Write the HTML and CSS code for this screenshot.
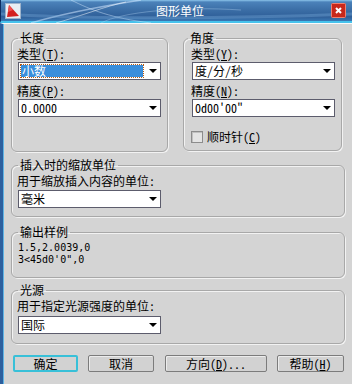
FILE: index.html
```html
<!DOCTYPE html>
<html lang="zh-CN">
<head>
    <meta charset="UTF-8">
    <title>图形单位</title>
    <link rel="stylesheet" href="styles.css">
</head>
<body>
    <div class="window">
        <div class="titlebar">
            <svg class="streaks" width="352" height="23" viewBox="0 0 352 23">
                <path d="M30 23 C60 14 90 8 140 0" stroke="#cfe6ff" stroke-width="1.5" fill="none" opacity="0.55"/>
                <path d="M55 23 C80 16 105 6 125 2" stroke="#ffffff" stroke-width="1" fill="none" opacity="0.5"/>
                <path d="M70 0 C90 10 110 18 150 23" stroke="#d8ecff" stroke-width="1" fill="none" opacity="0.45"/>
                <path d="M100 23 C120 12 180 6 240 10" stroke="#bcdcf8" stroke-width="1" fill="none" opacity="0.35"/>
                <path d="M0 14 C60 18 200 20 352 14" stroke="#7fb2e0" stroke-width="3" fill="none" opacity="0.35"/>
            </svg>
            <span class="app-icon">
                <svg width="16" height="16" viewBox="0 0 16 16">
                    <rect x="0.5" y="0.5" width="15" height="15" fill="#e8eef4" stroke="#9fb4cc"/>
                    <polygon points="4,2 14,13 2,14" fill="#d42020"/>
                    <polygon points="4,2 8,7 3,9" fill="#f05050"/>
                </svg>
            </span>
            <span class="title">图形单位</span>
            <span class="close-btn">
                <svg width="15" height="15" viewBox="0 0 15 15">
                    <rect x="0.5" y="0.5" width="14" height="14" rx="1" fill="#c8281c" stroke="#f08070"/>
                    <path d="M5 5 L10 10 M10 5 L5 10" stroke="#ffffff" stroke-width="2"/>
                </svg>
            </span>
        </div>

        <div class="dialog">
            <div class="top-row">
                <fieldset class="group group-length">
                    <legend>长度</legend>
                    <div class="lbl">类型(<u>T</u>):</div>
                    <div class="combo">
                        <span class="value selected">小数</span>
                        <span class="arrow"></span>
                    </div>
                    <div class="lbl lbl-gap">精度(<u>P</u>):</div>
                    <div class="combo">
                        <span class="value">0.0000</span>
                        <span class="arrow"></span>
                    </div>
                </fieldset>

                <fieldset class="group group-angle">
                    <legend>角度</legend>
                    <div class="lbl">类型(<u>Y</u>):</div>
                    <div class="combo">
                        <span class="value">度/分/秒</span>
                        <span class="arrow"></span>
                    </div>
                    <div class="lbl lbl-gap">精度(<u>N</u>):</div>
                    <div class="combo">
                        <span class="value">0d00'00"</span>
                        <span class="arrow"></span>
                    </div>
                    <div class="check-row">
                        <span class="checkbox"></span>
                        <span>顺时针(<u>C</u>)</span>
                    </div>
                </fieldset>
            </div>

            <fieldset class="group group-insert">
                <legend>插入时的缩放单位</legend>
                <div class="lbl">用于缩放插入内容的单位:</div>
                <div class="combo">
                    <span class="value">毫米</span>
                    <span class="arrow"></span>
                </div>
            </fieldset>

            <fieldset class="group group-sample">
                <legend>输出样例</legend>
                <div class="sample">1.5,2.0039,0</div>
                <div class="sample">3&lt;45d0'0",0</div>
            </fieldset>

            <fieldset class="group group-light">
                <legend>光源</legend>
                <div class="lbl">用于指定光源强度的单位:</div>
                <div class="combo">
                    <span class="value">国际</span>
                    <span class="arrow"></span>
                </div>
            </fieldset>

            <div class="buttons">
                <div class="btn btn-ok">确定</div>
                <div class="btn btn-cancel">取消</div>
                <div class="btn btn-dir">方向(<u>D</u>)...</div>
                <div class="btn btn-help">帮助(<u>H</u>)</div>
            </div>
        </div>
    </div>
</body>
</html>
```

FILE: styles.css
```css
body {
    margin: 0;
    font-family: "Noto Sans CJK SC", sans-serif;
    font-size: 12px;
    line-height: 12px;
    font-feature-settings: "hwid" 1;
    color: #000;
    background: #d4d4d4;
}
.window {
    width: 352px;
    height: 384px;
    display: flex;
    flex-direction: column;
    overflow: hidden;
}
.titlebar {
    position: relative;
    height: 21px;
    flex: none;
    display: flex;
    align-items: center;
    background: linear-gradient(180deg, #8cc4ea 0, #4b82ba 2px, #3c6fa7 45%, #2f5f99 80%, #3a78b4 100%);
    border-bottom: 2px solid #46c2ec;
    border-left: 1px solid #0c2c60;
}
.streaks {
    position: absolute;
    left: 0;
    top: 0;
}
.app-icon {
    position: relative;
    width: 16px;
    height: 16px;
    margin-left: 4px;
    display: flex;
}
.title {
    position: relative;
    flex: 1;
    text-align: center;
    padding-left: 8px;
    color: #fff;
    font-size: 12px;
}
.close-btn {
    position: relative;
    width: 15px;
    height: 15px;
    margin-right: 6px;
    display: flex;
}
.dialog {
    flex: 1;
    border-top: 1px solid #fafafa;
    border-left: 3px solid #2c5f9e;
    box-shadow: inset 1px 0 0 #5fb4e4;
    padding: 8px 7px 0 8px;
    display: flex;
    flex-direction: column;
}
.top-row {
    display: flex;
    gap: 15px;
}
.group {
    margin: 0;
    box-sizing: border-box;
    border: 1px solid #a8a8a8;
    border-radius: 6px;
    box-shadow: inset 1px 1px 0 #f2f2f2, 1px 1px 0 #f2f2f2;
    padding: 4px 6px 0 5px;
    min-width: 0;
}
.group legend {
    padding: 0 2px;
    margin-left: 1px;
    line-height: 12px;
}
.group-length {
    width: 157px;
    height: 120px;
}
.group-angle {
    width: 159px;
    height: 119px;
    padding-left: 7px;
}
.group-angle legend {
    margin-left: -3px;
}
.group-insert {
    margin-top: 7px;
    height: 58px;
}
.group-sample {
    margin-top: 9px;
    height: 52px;
}
.group-light {
    margin-top: 6px;
    height: 60px;
}
.lbl {
    height: 12px;
    margin-bottom: 2px;
}
.lbl-gap {
    margin-top: 5px;
}
.group-insert .lbl {
    margin-bottom: 3px;
}
.group-light .lbl {
    margin-bottom: 4px;
}
.combo {
    width: 143px;
    height: 18px;
    box-sizing: border-box;
    margin-left: 1px;
    border: 1px solid #5c5c6c;
    background: #fff;
    display: flex;
    align-items: center;
}
.value {
    flex: 1;
    padding-left: 2px;
}
.value.selected {
    flex: none;
    width: 121px;
    height: 12px;
    margin-left: 2px;
    margin-right: 3px;
    padding-left: 1px;
    background: #3a8edb;
    color: #fff;
    outline: 1px dotted #b85a10;
}
.arrow {
    width: 0;
    height: 0;
    border-left: 4px solid transparent;
    border-right: 4px solid transparent;
    border-top: 4px solid #000;
    margin-right: 3px;
    margin-left: auto;
}
.check-row {
    margin-top: 14px;
    display: flex;
    align-items: center;
    gap: 4px;
}
.checkbox {
    width: 10px;
    height: 10px;
    border: 1px solid #8c8c8c;
    background: #e4e4e4;
    box-shadow: inset 1px 1px 0 #c0c0c0;
}
.sample {
    height: 12px;
    padding-left: 1px;
    font-family: "DejaVu Sans Mono", monospace;
    font-size: 10px;
    line-height: 12px;
}
.buttons {
    margin-top: 11px;
    margin-left: 2px;
    display: flex;
    gap: 10px;
}
.btn {
    height: 17px;
    box-sizing: border-box;
    border: 1px solid #7c7c7c;
    border-radius: 2px;
    background: #d2d2d2;
    box-shadow: inset 1px 1px 0 #ececec;
    display: flex;
    align-items: center;
    justify-content: center;
}
.btn-ok {
    width: 65px;
    border: 2px solid #38c0d8;
    box-shadow: none;
}
.btn-cancel {
    width: 66px;
}
.btn-dir {
    width: 102px;
    margin-left: 1px;
}
.btn-help {
    width: 67px;
}
```
